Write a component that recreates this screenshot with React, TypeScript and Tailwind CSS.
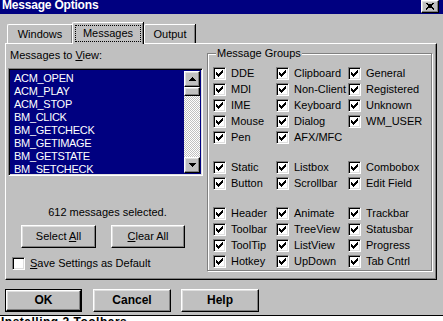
import React from "react";

const raised =
  "border border-t-white border-l-white border-r-black border-b-black shadow-[inset_-1px_-1px_0_#808080,inset_1px_1px_0_#dfdfdf]";
const sunken =
  "border border-t-[#808080] border-l-[#808080] border-r-white border-b-white shadow-[inset_1px_1px_0_#000,inset_-1px_-1px_0_#dfdfdf]";

function Check() {
  const cols = [2, 3, 4, 3, 2, 1, 0];
  return (
    <svg width="7" height="7" viewBox="0 0 7 7" shapeRendering="crispEdges">
      {cols.map((y, x) => (
        <rect key={x} x={x} y={y} width="1" height="3" fill="#000" />
      ))}
    </svg>
  );
}

function Box({ checked }: { checked: boolean }) {
  return (
    <div className={`w-[13px] h-[13px] bg-white flex items-center justify-center shrink-0 ${sunken}`}>
      {checked && <Check />}
    </div>
  );
}

function CB({ label }: { label: string }) {
  return (
    <div className="flex items-center h-[16px]">
      <Box checked />
      <span className="ml-[5px] whitespace-nowrap">{label}</span>
    </div>
  );
}

function Row({ a, b, c }: { a: string; b: string; c?: string }) {
  return (
    <div className="grid grid-cols-[63px_72px_1fr]">
      <CB label={a} />
      <CB label={b} />
      {c ? <CB label={c} /> : <div />}
    </div>
  );
}

function Arrow({ up }: { up: boolean }) {
  return (
    <div className={`w-[16px] h-[16px] bg-[#c0c0c0] flex items-center justify-center ${raised}`}>
      <svg width="7" height="4" viewBox="0 0 7 4" shapeRendering="crispEdges">
        {up ? (
          <polygon points="3.5,0 7,4 0,4" fill="#000" />
        ) : (
          <polygon points="0,0 7,0 3.5,4" fill="#000" />
        )}
      </svg>
    </div>
  );
}

const items = [
  "ACM_OPEN",
  "ACM_PLAY",
  "ACM_STOP",
  "BM_CLICK",
  "BM_GETCHECK",
  "BM_GETIMAGE",
  "BM_GETSTATE",
  "BM_SETCHECK",
];

export default function App() {
  return (
    <div
      className="w-[443px] h-[321px] overflow-hidden bg-[#c0c0c0] flex flex-col text-[11px] leading-[13px] text-black"
      style={{ fontFamily: '"Liberation Sans", Arial, sans-serif' }}
    >
      {/* Title bar */}
      <div className="h-[14px] bg-[#000080] flex items-start justify-between overflow-hidden">
        <span className="ml-[2px] -mt-[2px] text-white font-bold text-[12px] leading-[14px] tracking-[-0.2px]">
          Message Options
        </span>
        <div className={`mr-[4px] w-[18px] h-[13px] bg-[#c0c0c0] flex items-center justify-center ${raised}`}>
          <svg width="8" height="7" viewBox="0 0 8 7" shapeRendering="crispEdges">
            <path d="M0 0 L8 7 M1 0 L8 6 M8 0 L0 7 M7 0 L0 6" stroke="#000" strokeWidth="1" />
          </svg>
        </div>
      </div>

      {/* Tabs */}
      <div className="flex items-end h-[21px] mt-[8px] pl-[7px] relative z-10">
        <div className="w-[65px] h-[19px] border-t border-l border-white rounded-tl-[2px] shadow-[inset_-1px_0_0_#808080,1px_0_0_#000] flex items-center justify-center">
          Windows
        </div>
        <div className="w-[71px] h-[22px] -mb-[1px] bg-[#c0c0c0] border-t border-l border-white rounded-tl-[2px] shadow-[inset_-1px_0_0_#808080,1px_0_0_#000] flex items-center justify-center p-[2px]">
          <div className="w-full h-full border border-dotted border-black flex items-center justify-center">
            Messages
          </div>
        </div>
        <div className="ml-[1px] w-[51px] h-[19px] border-t border-l border-white rounded-tl-[2px] shadow-[inset_-1px_0_0_#808080,1px_0_0_#000] flex items-center justify-center">
          Output
        </div>
      </div>

      {/* Panel */}
      <div className="ml-[5px] w-[432px] h-[237px] border-t border-l border-white border-r border-r-black border-b border-b-black shadow-[inset_-1px_-1px_0_#808080] flex">
        {/* Left column */}
        <div className="ml-[2px] w-[195px] flex flex-col">
          <div className="mt-[5px] ml-[2px]">
            Messages to <span className="underline">V</span>iew:
          </div>
          <div className={`mt-[6px] h-[108px] flex ${sunken} p-[2px] bg-[#000080]`}>
            <div className="flex-1 bg-[#000080] text-white pt-[1px] pl-[3px] tracking-[-0.3px] overflow-hidden">
              {items.map((t) => (
                <div key={t} className="h-[13px] leading-[13px] text-[11px]">
                  {t}
                </div>
              ))}
            </div>
            <div className="w-[16px] flex flex-col bg-[repeating-conic-gradient(#c0c0c0_0_25%,#fff_0_50%)] bg-[length:2px_2px]">
              <Arrow up />
              <div className={`h-[9px] bg-[#c0c0c0] ${raised}`} />
              <div className="flex-1" />
              <Arrow up={false} />
            </div>
          </div>
          <div className="mt-[30px] text-center pl-[4px]">612 messages selected.</div>
          <div className="mt-[6px] ml-[13px] flex gap-[15px]">
            <div className={`w-[75px] h-[23px] flex items-center justify-center ${raised}`}>
              <span>
                Select <span className="underline">A</span>ll
              </span>
            </div>
            <div className={`w-[74px] h-[23px] flex items-center justify-center ${raised}`}>
              <span>
                <span className="underline">C</span>lear All
              </span>
            </div>
          </div>
          <div className="mt-[9px] ml-[4px] flex items-center">
            <Box checked={false} />
            <span className="ml-[5px]">
              <span className="underline">S</span>ave Settings as Default
            </span>
          </div>
        </div>

        {/* Right group box */}
        <div className="ml-[4px] mt-[9px] w-[225px] h-[218px] relative border border-[#808080] shadow-[inset_1px_1px_0_#fff,1px_1px_0_#fff]">
          <div className="absolute -top-[7px] left-[8px] px-[1px] bg-[#c0c0c0] leading-[13px]">
            Message Groups
          </div>
          <div className="pt-[11px] pl-[5px] flex flex-col">
            <div className="flex flex-col">
              <Row a="DDE" b="Clipboard" c="General" />
              <Row a="MDI" b="Non-Client" c="Registered" />
              <Row a="IME" b="Keyboard" c="Unknown" />
              <Row a="Mouse" b="Dialog" c="WM_USER" />
              <Row a="Pen" b="AFX/MFC" />
            </div>
            <div className="flex flex-col mt-[14px]">
              <Row a="Static" b="Listbox" c="Combobox" />
              <Row a="Button" b="Scrollbar" c="Edit Field" />
            </div>
            <div className="flex flex-col mt-[14px]">
              <Row a="Header" b="Animate" c="Trackbar" />
              <Row a="Toolbar" b="TreeView" c="Statusbar" />
              <Row a="ToolTip" b="ListView" c="Progress" />
              <Row a="Hotkey" b="UpDown" c="Tab Cntrl" />
            </div>
          </div>
        </div>
      </div>

      {/* Bottom buttons */}
      <div className="mt-[9px] ml-[5px] flex gap-[11px] font-bold text-[12px]">
        <div className="w-[77px] h-[23px] border border-black">
          <div className={`w-full h-full flex items-center justify-center ${raised}`}>OK</div>
        </div>
        <div className={`w-[78px] h-[23px] flex items-center justify-center ${raised}`}>Cancel</div>
        <div className={`-ml-[1px] w-[78px] h-[23px] flex items-center justify-center ${raised}`}>Help</div>
      </div>

      {/* Underlying window strip */}
      <div className="mt-auto h-[6px] bg-white border-t border-black overflow-hidden">
        <div className="pl-[1px] font-bold text-[12px] leading-[12px] tracking-[0.5px]">Installing 2 Toolbars</div>
      </div>
    </div>
  );
}
